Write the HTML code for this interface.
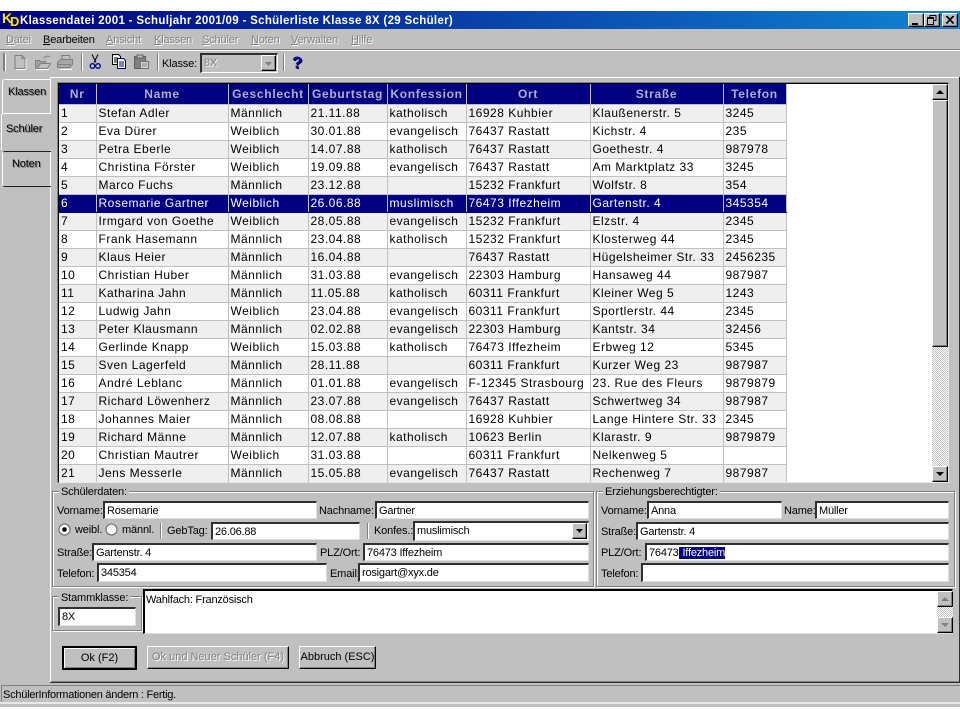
<!DOCTYPE html>
<html><head><meta charset="utf-8"><title>Klassendatei 2001</title>
<style>
html,body{margin:0;padding:0;background:#fff;width:960px;height:720px;overflow:hidden}
body{position:relative;font:11px "Liberation Sans",Arial,sans-serif;color:#000}
.a,.t,.i,.b,.g,.s{position:absolute;box-sizing:border-box}
.t{white-space:nowrap;line-height:14px;letter-spacing:-.15px}
.d{color:#808080;text-shadow:1px 1px 0 #fff}
.i{background:#fff;border-top:2px solid #303030;border-left:2px solid #303030;border-right:1px solid #dfdfdf;border-bottom:1px solid #dfdfdf;padding-left:2px;line-height:16px;white-space:nowrap;overflow:hidden;letter-spacing:-.2px}
.g{border:1px solid #808080;box-shadow:1px 1px 0 #fff,inset 1px 1px 0 #fff}
.l{background:#c0c0c0;padding:0 2px}
.b{background:#c0c0c0;border-top:1px solid #fff;border-left:1px solid #fff;border-right:1px solid #000;border-bottom:1px solid #000;box-shadow:inset -1px -1px 0 #808080}
.bt{text-align:center;line-height:20px;font-size:11px;white-space:nowrap}
.tab{left:0;width:960px}
table{border-collapse:collapse;table-layout:fixed;position:absolute;left:59px;top:84px;width:727px;font:12px "Liberation Sans",Arial,sans-serif;letter-spacing:.5px}
th{background:#000080;color:#b0b0cc;font-weight:bold;height:20px;padding:0;border-right:1px solid #c0c0c0;border-bottom:1px solid #c0c0c0;letter-spacing:.7px;box-sizing:border-box}
td{height:18px;padding:0 0 0 2px;border-right:1px solid #c0c0c0;border-bottom:1px solid #c0c0c0;white-space:nowrap;overflow:hidden;box-sizing:border-box;line-height:16px}
tr:nth-child(odd) td{background:#efefef}
tr:nth-child(even) td{background:#fff}
tr.sel td{background:#000080!important;color:#fff;border-right-color:#c0c0c0;border-bottom-color:#000080}
.dith{background:conic-gradient(#fff 25%,#c0c0c0 0 50%,#fff 0 75%,#c0c0c0 0) 0 0/2px 2px}
u{text-decoration:underline}
</style></head><body>

<div class="a" style="left:0;top:11px;width:960px;height:696px;background:#c0c0c0"></div>

<!-- title bar -->
<div class="a" style="left:0;top:11px;width:960px;height:18px;background:linear-gradient(90deg,#000080,#1084d0)"></div>
<div class="t" style="left:2px;top:10px;font:bold 14px/16px 'Liberation Sans',sans-serif;color:#ffe800;text-shadow:1px 1px 0 #000">K</div>
<div class="t" style="left:10px;top:15px;font:bold 13px/14px 'Liberation Sans',sans-serif;color:#ffe800;text-shadow:1px 1px 0 #000">D</div>
<div class="t" style="left:20px;top:14px;color:#fff;font-weight:bold;font-size:11.5px;letter-spacing:.32px">Klassendatei 2001 - Schuljahr 2001/09 - Schülerliste Klasse 8X (29 Schüler)</div>
<div class="b" style="left:908px;top:13px;width:16px;height:14px"><svg width="14" height="12" style="display:block"><rect x="3" y="9" width="6" height="2"/></svg></div>
<div class="b" style="left:924px;top:13px;width:16px;height:14px"><svg width="14" height="12" style="display:block"><path d="M5 1.500h6v5h-2M5 1v2M2.500 4.500h6v6h-6zM2 3.500h7" fill="none" stroke="#000"/></svg></div>
<div class="b" style="left:942px;top:13px;width:16px;height:14px"><svg width="14" height="12" style="display:block"><path d="M3 2l7 7.500M4 2l7 7.500M10 2l-7 7.500M11 2l-7 7.500" stroke="#000" fill="none"/></svg></div>

<!-- menu -->
<div class="t d" style="left:6px;top:33px"><u>D</u>atei</div>
<div class="t" style="left:43px;top:33px"><u>B</u>earbeiten</div>
<div class="t d" style="left:106px;top:33px"><u>A</u>nsicht</div>
<div class="t d" style="left:154px;top:33px"><u>K</u>lassen</div>
<div class="t d" style="left:202px;top:33px"><u>S</u>chüler</div>
<div class="t d" style="left:251px;top:33px"><u>N</u>oten</div>
<div class="t d" style="left:291px;top:33px"><u>V</u>erwalten</div>
<div class="t d" style="left:351px;top:33px"><u>H</u>ilfe</div>
<div class="a tab" style="top:49px;height:1px;background:#808080"></div>
<div class="a tab" style="top:50px;height:1px;background:#fff"></div>

<!-- toolbar -->
<div class="a" style="left:3px;top:53px;width:2px;height:18px;background:#808080;box-shadow:1px 0 0 #fff"></div>
<svg class="a" style="left:12px;top:53px" width="16" height="18"><path d="M3 2.500h7l3 3v10H3z" fill="#c0c0c0" stroke="#808080"/><path d="M4 16.500h10M14 6v10" stroke="#fff"/><path d="M10 2.500v3h3" fill="none" stroke="#808080"/></svg>
<svg class="a" style="left:34px;top:53px" width="18" height="18"><path d="M1.500 7.500h4l1 1h5v7h-10z" fill="#a0a0a0" stroke="#808080"/><path d="M3.500 15.500l3-5h10l-3 5z" fill="#c0c0c0" stroke="#808080"/><path d="M10 5.500c1-2 3-3 6-2" fill="none" stroke="#808080"/><path d="M2 16.500h13" stroke="#fff"/></svg>
<svg class="a" style="left:56px;top:53px" width="18" height="18"><path d="M5.500 2.500h8l1 5h-8z" fill="#c0c0c0" stroke="#808080"/><path d="M1.500 9.500l3-3h12v5l-3 3h-12z" fill="#a8a8a8" stroke="#808080"/><path d="M2 11.500h12v3" fill="none" stroke="#808080"/><path d="M4 16.500h12" stroke="#fff"/></svg>
<div class="a" style="left:81px;top:53px;width:1px;height:18px;background:#808080;box-shadow:1px 0 0 #fff"></div>
<svg class="a" style="left:88px;top:53px" width="16" height="18"><path d="M4 1.500l4 8M10 1.500l-4 8" stroke="#000" fill="none"/><circle cx="4.500" cy="13" r="2.300" fill="none" stroke="#000080" stroke-width="1.300"/><circle cx="10" cy="13" r="2.300" fill="none" stroke="#000080" stroke-width="1.300"/></svg>
<svg class="a" style="left:111px;top:53px" width="17" height="18"><path d="M1.500 1.500h6l2 2v8h-8z" fill="#fff" stroke="#000"/><path d="M6.500 5.500h6l2 2v8h-8z" fill="#fff" stroke="#000080"/><path d="M3 5h4M3 7h3M3 9h3" stroke="#000"/><path d="M8 9h5M8 11h5M8 13h5" stroke="#000080"/></svg>
<svg class="a" style="left:133px;top:53px" width="17" height="18"><rect x="1.500" y="3.500" width="11" height="12" fill="#808080" stroke="#606060"/><rect x="4" y="2" width="6" height="3" fill="#c0c0c0" stroke="#606060"/><path d="M7.500 8.500h8v7h-8z" fill="#d8d8d8" stroke="#707070"/><path d="M9 11h5M9 13h5" stroke="#808080"/></svg>
<div class="a" style="left:157px;top:53px;width:1px;height:18px;background:#808080;box-shadow:1px 0 0 #fff"></div>
<div class="t" style="left:162px;top:57px">Klasse:</div>
<div class="i" style="left:200px;top:53px;width:78px;height:20px;background:#c0c0c0;border-right-color:#fff;border-bottom-color:#fff;line-height:17px;color:#808080;text-shadow:1px 1px 0 #fff">8X</div>
<div class="b" style="left:261px;top:55px;width:15px;height:16px"><svg width="13" height="14" style="display:block"><path d="M3 6h7l-3.500 4z" fill="#808080"/></svg></div>
<div class="a" style="left:283px;top:53px;width:1px;height:18px;background:#808080;box-shadow:1px 0 0 #fff"></div>
<div class="t" style="left:292px;top:53px;font:bold 17px/19px 'Liberation Sans',sans-serif;color:#0000c0;text-shadow:1px 1px 0 #000">?</div>

<!-- panel -->
<div class="a" style="left:50px;top:77px;width:909px;height:1px;background:#fff"></div>
<div class="a" style="left:50px;top:77px;width:1px;height:37px;background:#fff"></div>
<div class="a" style="left:50px;top:150px;width:1px;height:532px;background:#fff"></div>
<div class="a" style="left:959px;top:77px;width:1px;height:606px;background:#303030"></div>
<div class="a" style="left:50px;top:682px;width:910px;height:1px;background:#303030"></div>
<div class="a" style="left:51px;top:681px;width:908px;height:1px;background:#808080"></div>

<!-- tabs -->
<div class="a" style="left:2px;top:79px;width:49px;height:35px;border-top:1px solid #fff;border-left:1px solid #fff;border-bottom:1px solid #fff;border-radius:3px 0 0 0;box-sizing:border-box"></div>
<div class="t" style="left:8px;top:85px;color:#000;text-shadow:1px 1px 0 #808080;">Klassen</div>
<div class="a" style="left:1px;top:114px;width:1px;height:36px;background:#fff"></div>
<div class="t" style="left:6px;top:122px;color:#000;text-shadow:1px 1px 0 #808080;">Schüler</div>
<div class="a" style="left:2px;top:151px;width:49px;height:36px;border-top:1px solid #202020;border-left:1px solid #fff;border-bottom:1px solid #202020;border-radius:3px 0 0 3px;box-sizing:border-box"></div>
<div class="t" style="left:12px;top:157px;color:#000;text-shadow:1px 1px 0 #808080;">Noten</div>

<!-- grid -->
<div class="a" style="left:58px;top:83px;width:891px;height:400px;background:#fff;border-top:1px solid #000;border-left:1px solid #000;border-right:1px solid #e8e8e8;border-bottom:1px solid #e8e8e8;box-shadow:-1px -1px 0 #808080"></div>
<div class="a" style="left:59px;top:84px;width:873px;height:398px;overflow:hidden">
<table style="left:0;top:0">
<colgroup><col style="width:37px"><col style="width:132px"><col style="width:80px"><col style="width:79px"><col style="width:79px"><col style="width:124px"><col style="width:133px"><col style="width:63px"></colgroup>
<thead><tr><th>Nr</th><th>Name</th><th>Geschlecht</th><th>Geburtstag</th><th>Konfession</th><th>Ort</th><th>Straße</th><th>Telefon</th></tr></thead>
<tbody>
<tr><td>1</td><td>Stefan Adler</td><td>Männlich</td><td>21.11.88</td><td>katholisch</td><td>16928 Kuhbier</td><td>Klaußenerstr. 5</td><td>3245</td></tr>
<tr><td>2</td><td>Eva Dürer</td><td>Weiblich</td><td>30.01.88</td><td>evangelisch</td><td>76437 Rastatt</td><td>Kichstr. 4</td><td>235</td></tr>
<tr><td>3</td><td>Petra Eberle</td><td>Weiblich</td><td>14.07.88</td><td>katholisch</td><td>76437 Rastatt</td><td>Goethestr. 4</td><td>987978</td></tr>
<tr><td>4</td><td>Christina Förster</td><td>Weiblich</td><td>19.09.88</td><td>evangelisch</td><td>76437 Rastatt</td><td>Am Marktplatz 33</td><td>3245</td></tr>
<tr><td>5</td><td>Marco Fuchs</td><td>Männlich</td><td>23.12.88</td><td></td><td>15232 Frankfurt</td><td>Wolfstr. 8</td><td>354</td></tr>
<tr class="sel"><td>6</td><td>Rosemarie Gartner</td><td>Weiblich</td><td>26.06.88</td><td>muslimisch</td><td>76473 Iffezheim</td><td>Gartenstr. 4</td><td>345354</td></tr>
<tr><td>7</td><td>Irmgard von Goethe</td><td>Weiblich</td><td>28.05.88</td><td>evangelisch</td><td>15232 Frankfurt</td><td>Elzstr. 4</td><td>2345</td></tr>
<tr><td>8</td><td>Frank Hasemann</td><td>Männlich</td><td>23.04.88</td><td>katholisch</td><td>15232 Frankfurt</td><td>Klosterweg 44</td><td>2345</td></tr>
<tr><td>9</td><td>Klaus Heier</td><td>Männlich</td><td>16.04.88</td><td></td><td>76437 Rastatt</td><td>Hügelsheimer Str. 33</td><td>2456235</td></tr>
<tr><td>10</td><td>Christian Huber</td><td>Männlich</td><td>31.03.88</td><td>evangelisch</td><td>22303 Hamburg</td><td>Hansaweg 44</td><td>987987</td></tr>
<tr><td>11</td><td>Katharina Jahn</td><td>Männlich</td><td>11.05.88</td><td>katholisch</td><td>60311 Frankfurt</td><td>Kleiner Weg 5</td><td>1243</td></tr>
<tr><td>12</td><td>Ludwig Jahn</td><td>Weiblich</td><td>23.04.88</td><td>evangelisch</td><td>60311 Frankfurt</td><td>Sportlerstr. 44</td><td>2345</td></tr>
<tr><td>13</td><td>Peter Klausmann</td><td>Männlich</td><td>02.02.88</td><td>evangelisch</td><td>22303 Hamburg</td><td>Kantstr. 34</td><td>32456</td></tr>
<tr><td>14</td><td>Gerlinde Knapp</td><td>Weiblich</td><td>15.03.88</td><td>katholisch</td><td>76473 Iffezheim</td><td>Erbweg 12</td><td>5345</td></tr>
<tr><td>15</td><td>Sven Lagerfeld</td><td>Männlich</td><td>28.11.88</td><td></td><td>60311 Frankfurt</td><td>Kurzer Weg 23</td><td>987987</td></tr>
<tr><td>16</td><td>André Leblanc</td><td>Männlich</td><td>01.01.88</td><td>evangelisch</td><td>F-12345 Strasbourg</td><td>23. Rue des Fleurs</td><td>9879879</td></tr>
<tr><td>17</td><td>Richard Löwenherz</td><td>Männlich</td><td>23.07.88</td><td>evangelisch</td><td>76437 Rastatt</td><td>Schwertweg 34</td><td>987987</td></tr>
<tr><td>18</td><td>Johannes Maier</td><td>Männlich</td><td>08.08.88</td><td></td><td>16928 Kuhbier</td><td>Lange Hintere Str. 33</td><td>2345</td></tr>
<tr><td>19</td><td>Richard Männe</td><td>Männlich</td><td>12.07.88</td><td>katholisch</td><td>10623 Berlin</td><td>Klarastr. 9</td><td>9879879</td></tr>
<tr><td>20</td><td>Christian Mautrer</td><td>Weiblich</td><td>31.03.88</td><td></td><td>60311 Frankfurt</td><td>Nelkenweg 5</td><td></td></tr>
<tr><td>21</td><td>Jens Messerle</td><td>Männlich</td><td>15.05.88</td><td>evangelisch</td><td>76437 Rastatt</td><td>Rechenweg 7</td><td>987987</td></tr>
</tbody></table>
</div>

<!-- grid scrollbar -->
<div class="a dith" style="left:932px;top:84px;width:16px;height:398px"></div>
<div class="b" style="left:932px;top:84px;width:16px;height:16px"><svg width="14" height="14" style="display:block"><path d="M3 9h8L7 5z"/></svg></div>
<div class="b" style="left:932px;top:100px;width:16px;height:247px"></div>
<div class="b" style="left:932px;top:466px;width:16px;height:16px"><svg width="14" height="14" style="display:block"><path d="M3 5h8L7 9z"/></svg></div>

<!-- Schülerdaten -->
<div class="g" style="left:52px;top:491px;width:542px;height:96px"></div>
<div class="t l" style="left:59px;top:485px">Schülerdaten:</div>
<div class="t" style="left:57px;top:504px">Vorname:</div>
<div class="i" style="left:103px;top:501px;width:214px;height:18px">Rosemarie</div>
<div class="t" style="left:319px;top:504px">Nachname:</div>
<div class="i" style="left:375px;top:501px;width:214px;height:18px">Gartner</div>
<svg class="a" style="left:58px;top:523px" width="14" height="14"><circle cx="6.500" cy="6.500" r="5.500" fill="#fff" stroke="#606060"/><circle cx="6.500" cy="6.500" r="2.300"/></svg>
<div class="t" style="left:75px;top:523px">weibl.</div>
<svg class="a" style="left:105px;top:523px" width="14" height="14"><circle cx="6.500" cy="6.500" r="5.500" fill="#fff" stroke="#606060"/></svg>
<div class="t" style="left:122px;top:523px">männl.</div>
<div class="a" style="left:160px;top:523px;width:1px;height:16px;background:#808080;box-shadow:1px 0 0 #fff"></div>
<div class="t" style="left:167px;top:524px">GebTag:</div>
<div class="i" style="left:211px;top:522px;width:149px;height:18px">26.06.88</div>
<div class="a" style="left:367px;top:523px;width:1px;height:16px;background:#808080;box-shadow:1px 0 0 #fff"></div>
<div class="t" style="left:374px;top:524px">Konfes.:</div>
<div class="i" style="left:413px;top:521px;width:176px;height:20px">muslimisch</div>
<div class="b" style="left:572px;top:523px;width:15px;height:16px"><svg width="13" height="14" style="display:block"><path d="M3 5h7l-3.500 4z"/></svg></div>
<div class="t" style="left:57px;top:546px">Straße:</div>
<div class="i" style="left:92px;top:543px;width:225px;height:18px">Gartenstr. 4</div>
<div class="t" style="left:320px;top:546px">PLZ/Ort:</div>
<div class="i" style="left:363px;top:543px;width:226px;height:18px">76473 Iffezheim</div>
<div class="t" style="left:57px;top:567px">Telefon:</div>
<div class="i" style="left:97px;top:563px;width:230px;height:19px">345354</div>
<div class="t" style="left:330px;top:567px">Email:</div>
<div class="i" style="left:358px;top:563px;width:231px;height:19px">rosigart@xyx.de</div>

<!-- Erziehungsberechtigter -->
<div class="g" style="left:596px;top:491px;width:359px;height:96px"></div>
<div class="t l" style="left:603px;top:485px">Erziehungsberechtigter:</div>
<div class="t" style="left:601px;top:504px">Vorname:</div>
<div class="i" style="left:647px;top:501px;width:135px;height:18px">Anna</div>
<div class="t" style="left:784px;top:504px">Name:</div>
<div class="i" style="left:815px;top:501px;width:134px;height:18px">Müller</div>
<div class="t" style="left:601px;top:525px">Straße:</div>
<div class="i" style="left:636px;top:522px;width:313px;height:18px">Gartenstr. 4</div>
<div class="t" style="left:601px;top:546px">PLZ/Ort:</div>
<div class="i" style="left:645px;top:543px;width:304px;height:18px">76473<span style="background:#000080;color:#fff;padding-left:1px"> Iffezheim</span></div>
<div class="t" style="left:601px;top:567px">Telefon:</div>
<div class="i" style="left:641px;top:563px;width:308px;height:19px"></div>

<!-- Stammklasse -->
<div class="g" style="left:52px;top:596px;width:90px;height:35px"></div>
<div class="t l" style="left:59px;top:591px">Stammklasse:</div>
<div class="i" style="left:58px;top:607px;width:78px;height:19px">8X</div>
<div class="i" style="left:143px;top:589px;width:810px;height:45px;line-height:15px;padding:2px 0 0 1px;border-top-color:#000;border-left-color:#000">Wahlfach: Französisch</div>
<div class="a dith" style="left:937px;top:591px;width:16px;height:42px"></div>
<div class="b" style="left:937px;top:591px;width:16px;height:16px"><svg width="14" height="14" style="display:block"><path d="M3 9h8L7 5z" fill="#808080"/></svg></div>
<div class="b" style="left:937px;top:617px;width:16px;height:16px"><svg width="14" height="14" style="display:block"><path d="M3 5h8L7 9z" fill="#808080"/></svg></div>

<!-- buttons -->
<div class="b bt" style="left:62px;top:646px;width:75px;height:24px;border:2px solid #000;box-shadow:inset 1px 1px 0 #fff,inset -1px -1px 0 #808080">Ok (F2)</div>
<div class="b bt d" style="left:147px;top:646px;width:142px;height:23px;color:#808080">Ok und Neuer Schüler (F4)</div>
<div class="b bt" style="left:299px;top:646px;width:77px;height:23px">Abbruch (ESC)</div>

<!-- status -->
<div class="a" style="left:1px;top:685px;width:959px;height:17px;border-top:1px solid #808080;border-left:1px solid #808080;box-sizing:border-box"></div>
<div class="t" style="left:3px;top:688px;letter-spacing:-.25px">SchülerInformationen ändern : Fertig.</div>
<div class="a tab" style="top:702px;height:2px;background:#e8e8e8"></div>
</body></html>
